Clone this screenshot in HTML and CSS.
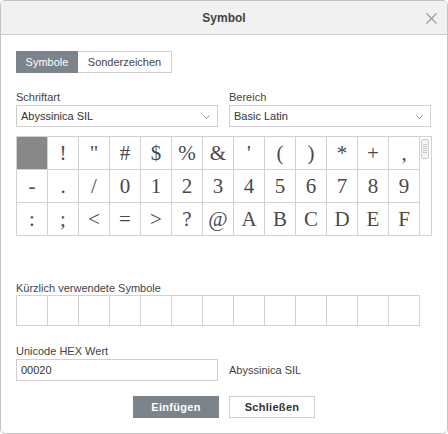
FILE: index.html
```html
<!doctype html>
<html lang="de">
  <head>
    <meta charset="UTF-8" />
    <title>Symbol</title>
    <link rel="stylesheet" href="styles.css">
  </head>
  <body>
    <div class="dialog">
      <div class="dialog-header">
        <span class="dialog-title">Symbol</span>
        <svg class="dialog-close" width="11" height="11" viewBox="0 0 11 11">
          <path d="M0.5 0.5 L10.5 10.5 M10.5 0.5 L0.5 10.5" stroke="#9a9a9a" stroke-width="1.1" fill="none" />
        </svg>
      </div>

      <div class="dialog-body">
        <div class="tab-group">
          <button class="tab-button active">Symbole</button>
          <button class="tab-button">Sonderzeichen</button>
        </div>

        <div class="field-row">
          <div class="field">
            <label>Schriftart</label>
            <div class="select-box">
              <span>Abyssinica SIL</span>
              <svg class="select-arrow" width="7" height="4" viewBox="0 0 7 4">
                <path d="M0.5 0.5 L3.5 3.5 L6.5 0.5" stroke="#888" stroke-width="1" fill="none" />
              </svg>
            </div>
          </div>
          <div class="field">
            <label>Bereich</label>
            <div class="select-box">
              <span>Basic Latin</span>
              <svg class="select-arrow" width="7" height="4" viewBox="0 0 7 4">
                <path d="M0.5 0.5 L3.5 3.5 L6.5 0.5" stroke="#888" stroke-width="1" fill="none" />
              </svg>
            </div>
          </div>
        </div>

        <!-- Symbol table -->
        <div class="symbol-table">
          <div class="symbol-grid">
            <div class="symbol-cell selected"></div>
            <div class="symbol-cell">!</div>
            <div class="symbol-cell">"</div>
            <div class="symbol-cell">#</div>
            <div class="symbol-cell">$</div>
            <div class="symbol-cell">%</div>
            <div class="symbol-cell">&amp;</div>
            <div class="symbol-cell">'</div>
            <div class="symbol-cell">(</div>
            <div class="symbol-cell">)</div>
            <div class="symbol-cell">*</div>
            <div class="symbol-cell">+</div>
            <div class="symbol-cell">,</div>
            <div class="symbol-cell">-</div>
            <div class="symbol-cell">.</div>
            <div class="symbol-cell">/</div>
            <div class="symbol-cell">0</div>
            <div class="symbol-cell">1</div>
            <div class="symbol-cell">2</div>
            <div class="symbol-cell">3</div>
            <div class="symbol-cell">4</div>
            <div class="symbol-cell">5</div>
            <div class="symbol-cell">6</div>
            <div class="symbol-cell">7</div>
            <div class="symbol-cell">8</div>
            <div class="symbol-cell">9</div>
            <div class="symbol-cell">:</div>
            <div class="symbol-cell">;</div>
            <div class="symbol-cell">&lt;</div>
            <div class="symbol-cell">=</div>
            <div class="symbol-cell">&gt;</div>
            <div class="symbol-cell">?</div>
            <div class="symbol-cell">@</div>
            <div class="symbol-cell">A</div>
            <div class="symbol-cell">B</div>
            <div class="symbol-cell">C</div>
            <div class="symbol-cell">D</div>
            <div class="symbol-cell">E</div>
            <div class="symbol-cell">F</div>
          </div>
          <div class="symbol-scroll">
            <div class="scroll-thumb"></div>
          </div>
        </div>

        <label class="section-label recent-label">Kürzlich verwendete Symbole</label>
        <div class="recent-grid">
          <div class="recent-cell"></div>
          <div class="recent-cell"></div>
          <div class="recent-cell"></div>
          <div class="recent-cell"></div>
          <div class="recent-cell"></div>
          <div class="recent-cell"></div>
          <div class="recent-cell"></div>
          <div class="recent-cell"></div>
          <div class="recent-cell"></div>
          <div class="recent-cell"></div>
          <div class="recent-cell"></div>
          <div class="recent-cell"></div>
          <div class="recent-cell"></div>
        </div>

        <label class="section-label hex-label">Unicode HEX Wert</label>
        <div class="hex-row">
          <div class="text-input">00020</div>
          <span class="hex-font">Abyssinica SIL</span>
        </div>

        <div class="dialog-footer">
          <button class="dialog-button primary">Einfügen</button>
          <button class="dialog-button">Schließen</button>
        </div>
      </div>
    </div>
  </body>
</html>
```

FILE: styles.css
```css
/* Symbol dialog */
:root {
  --dlg-border: #c4c4c4;
  --dlg-line: #d2d2d2;
  --dlg-text: #444;
  --dlg-accent: #7b838b;
}

body {
  margin: 0;
  font-family: 'Liberation Sans', Arial, sans-serif;
  font-size: 11px;
  color: var(--dlg-text);
  background: #fff;
}

.dialog {
  width: 448px;
  height: 434px;
  box-sizing: border-box;
  border: 1px solid var(--dlg-border);
  border-radius: 5px;
  overflow: hidden;
  background: #fff;
}

.dialog-header {
  height: 33px;
  background: #f1f1f1;
  border-bottom: 1px solid #cdcdcd;
  display: flex;
  align-items: center;
  justify-content: center;
  position: relative;
}

.dialog-title {
  font-size: 12px;
  font-weight: bold;
  color: var(--dlg-text);
}

.dialog-close {
  position: absolute;
  right: 10px;
  top: 12px;
}

.dialog-body {
  padding: 16px 15px 0 15px;
}

button {
  font-family: inherit;
  font-size: 11px;
  cursor: pointer;
}

.tab-group {
  display: flex;
  margin-bottom: 17px;
}

.tab-button {
  height: 22px;
  padding: 0;
  border: 1px solid #cfcfcf;
  background: #fff;
  color: var(--dlg-text);
}

.tab-button:first-child {
  width: 62px;
}

.tab-button:last-child {
  width: 94px;
  border-left: none;
}

.tab-button.active {
  background: var(--dlg-accent);
  border-color: var(--dlg-accent);
  color: #fff;
}

.field-row {
  display: grid;
  grid-template-columns: 202px 202px;
  column-gap: 11px;
}

.field label,
.section-label {
  display: block;
  line-height: 14px;
  margin-bottom: 1px;
}

.select-box {
  height: 22px;
  box-sizing: border-box;
  border: 1px solid #cfcfcf;
  display: flex;
  align-items: center;
  justify-content: space-between;
  padding: 0 7px 0 4px;
  color: #333;
}

.select-arrow {
  margin-top: 1px;
}

.symbol-table {
  margin-top: 9px;
  width: 416px;
  height: 100px;
  box-sizing: border-box;
  border: 1px solid var(--dlg-line);
  display: flex;
  overflow: hidden;
}

.symbol-grid {
  display: grid;
  grid-template-columns: repeat(13, 31px);
  grid-auto-rows: 33px;
}

.symbol-cell {
  box-sizing: border-box;
  border-right: 1px solid var(--dlg-line);
  border-bottom: 1px solid var(--dlg-line);
  display: flex;
  align-items: center;
  justify-content: center;
  font-family: 'Liberation Serif', 'Times New Roman', serif;
  font-size: 21px;
  color: #4a4a4a;
}

.symbol-cell.selected {
  background: #888;
}

.symbol-scroll {
  width: 11px;
  flex: none;
}

.scroll-thumb {
  margin: 2px 0 0 1px;
  width: 8px;
  height: 20px;
  box-sizing: border-box;
  border: 1px solid #cdcdcd;
  border-radius: 2px;
  background:
    repeating-linear-gradient(to bottom, #c8c8c8 0, #c8c8c8 1px, transparent 1px, transparent 2px)
    center / 4px 10px no-repeat,
    #f4f4f4;
}

.recent-label {
  margin-top: 45px;
  margin-bottom: 0;
}

.recent-grid {
  display: grid;
  grid-template-columns: repeat(13, 31px);
  grid-auto-rows: 30px;
  width: 404px;
  box-sizing: border-box;
  border-left: 1px solid var(--dlg-line);
  border-top: 1px solid var(--dlg-line);
}

.recent-cell {
  border-right: 1px solid var(--dlg-line);
  border-bottom: 1px solid var(--dlg-line);
}

.hex-label {
  margin-top: 18px;
}

.hex-row {
  display: flex;
  align-items: center;
  gap: 11px;
}

.text-input {
  width: 202px;
  height: 22px;
  box-sizing: border-box;
  border: 1px solid #cfcfcf;
  padding: 0 4px;
  line-height: 20px;
  color: #333;
}

.hex-font {
  color: var(--dlg-text);
}

.dialog-footer {
  display: flex;
  justify-content: center;
  gap: 10px;
  margin-top: 15px;
}

.dialog-button {
  width: 86px;
  height: 22px;
  padding: 0;
  border: 1px solid #cfcfcf;
  background: #fff;
  color: #333;
  font-weight: bold;
  letter-spacing: 0.3px;
}

.dialog-button.primary {
  background: var(--dlg-accent);
  border-color: var(--dlg-accent);
  color: #fff;
}
```
